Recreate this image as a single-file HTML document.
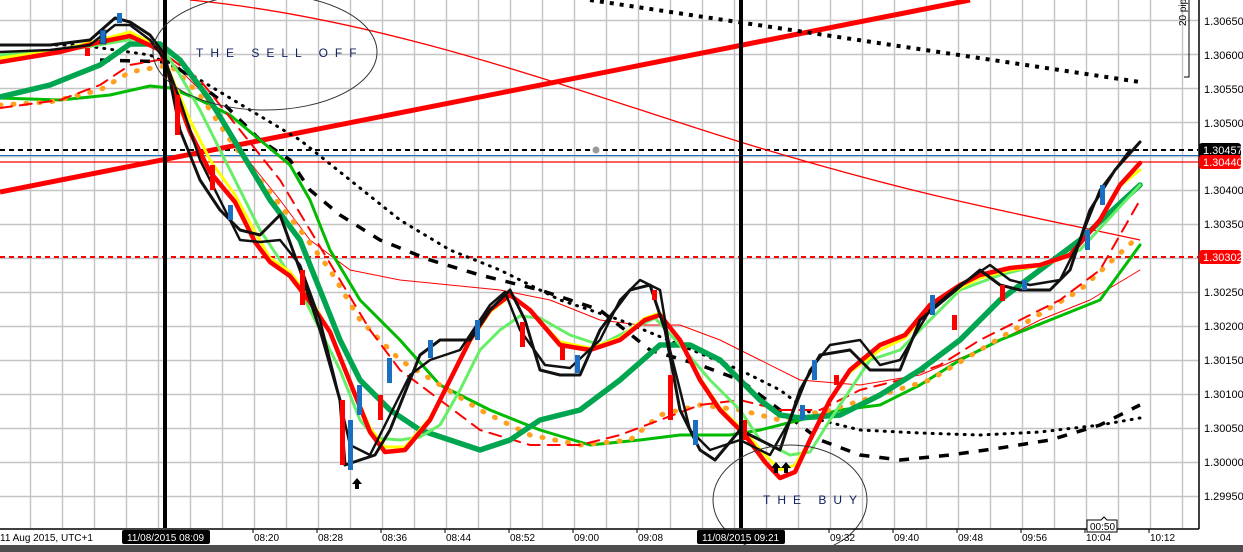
<!DOCTYPE html>
<html><head><meta charset="utf-8"><style>
html,body{margin:0;padding:0;background:#fff;width:1243px;height:552px;overflow:hidden}
svg{display:block;font-family:"Liberation Sans",sans-serif}
</style></head><body>
<svg width="1243" height="552" viewBox="0 0 1243 552" xmlns="http://www.w3.org/2000/svg">
<rect width="1243" height="552" fill="#fff"/>
<!-- grid -->
<path fill="none" stroke="#c4c4c4" stroke-width="1.4" d="M30.5 0V528M62.5 0V528M94.5 0V528M126.5 0V528M158.5 0V528M190.5 0V528M222.5 0V528M254.5 0V528M286.5 0V528M318.5 0V528M350.5 0V528M382.5 0V528M414.5 0V528M446.5 0V528M478.5 0V528M510.5 0V528M542.5 0V528M574.5 0V528M606.5 0V528M638.5 0V528M670.5 0V528M702.5 0V528M734.5 0V528M766.5 0V528M798.5 0V528M830.5 0V528M862.5 0V528M894.5 0V528M926.5 0V528M958.5 0V528M990.5 0V528M1022.5 0V528M1054.5 0V528M1086.5 0V528M1118.5 0V528M1150.5 0V528M1182.5 0V528"/>
<path fill="none" stroke="#c4c4c4" stroke-width="1.4" d="M0 20.5H1198M0 54.5H1198M0 88.5H1198M0 122.5H1198M0 156.5H1198M0 190.5H1198M0 224.5H1198M0 258.5H1198M0 292.5H1198M0 326.5H1198M0 360.5H1198M0 394.5H1198M0 428.5H1198M0 462.5H1198M0 496.5H1198"/>
<!-- horizontal levels -->
<path d="M0 150H1198" stroke="#000" stroke-width="2" stroke-dasharray="5,4"/>
<path d="M0 155.5H1198" stroke="#1a6fc0" stroke-width="1"/>
<path d="M0 162H1198" stroke="#f00" stroke-width="1.3"/>
<path d="M0 257H1198" stroke="#f00" stroke-width="2" stroke-dasharray="5,4"/>
<!-- trend lines -->
<path d="M0 192L970 0" stroke="#f00" stroke-width="5"/>
<path d="M590 0L1140 82" stroke="#000" stroke-width="4" stroke-dasharray="4,6"/>
<path d="M190 0C400 20 600 100 760 148S1000 210 1140 240" stroke="#f00" stroke-width="1.3" fill="none"/>
<circle cx="596" cy="150" r="3.5" fill="#999"/>
<g fill="none" stroke-linejoin="round" stroke-linecap="round">
<polyline stroke="#f00" stroke-width="1" points="160,50 200,90 240,150 280,200 310,240 350,270 400,280 450,285 500,290 550,300 600,320 640,325 680,325 720,340 760,360 800,380 860,385 920,375 980,350 1040,320 1090,300 1140,270"/>
<polyline stroke="#000" stroke-width="3" stroke-dasharray="1,7" points="0,45 80,45 150,55 200,80 250,110 300,140 350,180 400,220 450,250 500,270 560,300 620,320 680,345 740,370 780,390 820,420 860,430 920,433 980,435 1040,432 1100,425 1140,418"/>
<polyline stroke="#000" stroke-width="3.5" stroke-linecap="butt" stroke-dasharray="10,10" points="100,60 170,62 220,100 260,140 290,160 310,190 340,215 380,240 430,260 480,275 540,290 600,310 650,350 700,365 740,380 780,410 820,440 860,455 900,460 950,455 1000,448 1050,440 1100,425 1140,405"/>
<polyline stroke="#00bb00" stroke-width="3" points="0,98 60,100 110,95 150,86 170,88 200,100 230,115 260,140 290,165 310,200 330,250 360,300 400,340 440,385 490,410 540,430 590,445 640,440 680,435 730,435 760,430 800,420 840,410 880,405 920,385 960,360 1000,340 1050,320 1100,300 1140,245"/>
<polyline stroke="#ffa020" stroke-width="5" stroke-dasharray="1,12" points="0,105 50,102 100,90 130,72 170,65 200,95 230,140 260,180 300,230 330,270 360,320 400,360 440,385 480,410 530,435 580,445 630,440 660,415 700,405 740,410 780,420 830,410 880,395 930,380 980,350 1030,320 1080,290 1140,235"/>
<polyline stroke="#f00" stroke-width="2" stroke-dasharray="12,8" points="0,108 60,100 100,85 130,65 170,58 200,80 240,130 280,180 310,230 340,280 370,330 400,370 440,400 480,430 530,445 580,445 620,435 660,420 700,405 740,400 780,410 820,410 860,390 900,380 940,365 980,340 1020,320 1060,300 1100,270 1140,200"/>
<polyline stroke="#00a550" stroke-width="5.5" points="0,97 50,85 100,65 130,44 160,44 180,60 210,100 240,150 270,200 300,240 320,290 340,340 360,380 390,410 420,430 450,440 480,450 510,440 540,420 580,410 620,380 660,345 690,345 720,360 740,380 760,400 780,415 800,418 840,415 880,395 920,370 960,340 1000,300 1040,270 1080,240 1140,185"/>
<polyline stroke="#66ee66" stroke-width="3" points="0,55 80,48 140,38 165,52 180,75 200,110 230,170 260,230 280,260 300,290 320,330 340,370 360,420 375,438 400,440 420,437 440,425 460,390 480,350 500,330 520,316 540,318 570,335 600,345 630,330 655,318 680,345 710,380 740,410 760,440 790,455 810,452 830,420 850,390 870,360 900,350 930,320 960,290 1000,275 1040,265 1080,250 1140,185"/>
<polyline stroke="#ffff00" stroke-width="3" points="0,58 60,50 100,40 130,32 160,48 175,85 190,120 210,160 235,195 255,232 270,258 290,272 310,298 330,332 350,382 370,428 385,447 405,447 430,418 450,380 470,342 490,312 510,296 530,310 560,342 590,348 620,338 645,318 660,313 680,340 700,378 720,408 745,432 765,455 780,470 795,465 810,440 830,400 850,372 880,350 905,338 930,308 960,288 980,278 1010,270 1040,266 1070,256 1100,220 1120,186 1140,170"/>
<polyline stroke="#f00" stroke-width="4.5" points="0,62 60,52 100,42 130,36 160,50 175,92 190,132 210,172 235,202 255,242 270,262 290,276 310,302 330,332 350,382 370,432 385,452 405,450 430,420 450,380 470,340 490,310 510,295 530,310 560,345 590,350 620,340 645,320 660,315 680,340 700,380 720,410 745,435 765,462 780,478 795,472 810,440 830,400 850,370 880,345 905,335 930,305 960,285 980,275 1010,268 1040,265 1070,255 1100,220 1120,185 1140,163"/>
<polyline stroke="#111" stroke-width="3" points="0,45 50,45 90,40 115,18 130,22 150,35 165,55 180,130 200,180 220,210 240,230 260,235 280,215 300,270 320,330 340,400 345,465 360,460 375,455 390,430 410,380 420,355 440,340 470,340 490,310 510,290 525,320 540,370 560,375 580,375 600,330 630,290 650,285 665,330 680,410 700,450 715,460 740,430 760,440 780,450 800,390 820,355 850,350 870,370 900,370 920,320 950,295 980,270 1000,285 1020,290 1050,290 1070,270 1090,210 1115,170 1140,142"/>
<polyline stroke="#111" stroke-width="2.5" points="0,52 50,50 90,45 115,25 130,25 150,40 165,60 180,100 200,160 220,200 240,240 260,242 280,240 300,265 320,320 335,380 350,445 370,455 390,415 410,375 430,360 460,350 490,305 505,292 520,330 545,365 570,368 600,340 620,300 640,280 660,290 670,350 690,430 710,450 740,440 770,455 790,420 810,370 830,345 860,340 880,365 900,360 930,310 960,285 990,265 1010,280 1030,285 1060,280 1080,240 1100,190 1130,150"/>
</g>
<g>
<rect x="100" y="30" width="6" height="14" fill="#1a6fc0" stroke="#000" stroke-width="0.5"/>
<rect x="117" y="13" width="5" height="10" fill="#1a6fc0"/>
<rect x="85" y="48" width="5" height="8" fill="#f00"/>
<rect x="175" y="95" width="5" height="40" fill="#f00"/>
<rect x="210" y="165" width="5" height="25" fill="#f00"/>
<rect x="228" y="205" width="5" height="15" fill="#1a6fc0"/>
<rect x="300" y="270" width="5" height="35" fill="#f00"/>
<rect x="340" y="400" width="5" height="65" fill="#f00"/>
<rect x="348" y="420" width="5" height="50" fill="#1a6fc0"/>
<rect x="357" y="385" width="5" height="30" fill="#1a6fc0"/>
<rect x="378" y="395" width="5" height="25" fill="#f00"/>
<rect x="387" y="358" width="5" height="25" fill="#1a6fc0"/>
<rect x="428" y="340" width="5" height="18" fill="#1a6fc0"/>
<rect x="475" y="320" width="5" height="20" fill="#1a6fc0"/>
<rect x="520" y="322" width="5" height="25" fill="#f00"/>
<rect x="560" y="345" width="5" height="15" fill="#f00"/>
<rect x="575" y="355" width="5" height="18" fill="#1a6fc0"/>
<rect x="652" y="290" width="5" height="10" fill="#f00"/>
<rect x="668" y="375" width="5" height="45" fill="#f00"/>
<rect x="693" y="420" width="5" height="25" fill="#1a6fc0"/>
<rect x="742" y="420" width="5" height="20" fill="#f00"/>
<rect x="800" y="405" width="5" height="15" fill="#1a6fc0"/>
<rect x="812" y="360" width="5" height="20" fill="#1a6fc0"/>
<rect x="834" y="375" width="5" height="10" fill="#f00"/>
<rect x="930" y="295" width="5" height="20" fill="#1a6fc0"/>
<rect x="952" y="315" width="5" height="15" fill="#f00"/>
<rect x="1000" y="285" width="5" height="16" fill="#f00"/>
<rect x="1022" y="280" width="5" height="10" fill="#1a6fc0"/>
<rect x="1085" y="230" width="5" height="20" fill="#1a6fc0"/>
<rect x="1100" y="185" width="5" height="20" fill="#1a6fc0"/>
</g>
<path d="M165 0V528M741 0V528" stroke="#000" stroke-width="4"/>
<ellipse cx="265" cy="52" rx="112" ry="58" fill="none" stroke="#333" stroke-width="1"/>
<text x="196" y="57" font-size="12" fill="#102060" letter-spacing="7">THE SELL OFF</text>
<ellipse cx="790" cy="500" rx="77" ry="55" fill="none" stroke="#333" stroke-width="1"/>
<text x="763" y="504" font-size="12" fill="#102060" letter-spacing="7">THE BUY</text>
<g fill="#000"><path d="M357 478l-5 6h3v5h4v-5h3z"/><path d="M776 462l-5 6h3v5h4v-5h3z"/><path d="M786 462l-5 6h3v5h4v-5h3z"/></g>
<path d="M1189 0V77H1184" stroke="#000" stroke-width="1" fill="none"/>
<text transform="translate(1186,26) rotate(-90)" font-size="10" fill="#000">20 pips</text>
<path d="M1199 0V529M0 529H1199" stroke="#000" stroke-width="1.5"/>
<g font-size="11" fill="#000">
<text x="1204" y="25">1.30650</text><text x="1204" y="59">1.30600</text><text x="1204" y="93">1.30550</text>
<text x="1204" y="127">1.30500</text><text x="1204" y="194">1.30400</text><text x="1204" y="228">1.30350</text>
<text x="1204" y="296">1.30250</text><text x="1204" y="330">1.30200</text><text x="1204" y="364">1.30150</text>
<text x="1204" y="398">1.30100</text><text x="1204" y="432">1.30050</text><text x="1204" y="466">1.30000</text>
<text x="1204" y="500">1.29950</text>
</g>
<rect x="1199" y="143" width="42" height="14" rx="3" fill="#000"/><text x="1203" y="154" font-size="11" fill="#fff">1.30457</text>
<rect x="1199" y="155" width="42" height="14" rx="3" fill="#f00"/><text x="1203" y="166" font-size="11" fill="#fff">1.30440</text>
<rect x="1199" y="250" width="42" height="14" rx="3" fill="#f00"/><text x="1203" y="261" font-size="11" fill="#fff">1.30302</text>
<path stroke="#000" d="M253 529v4M317 529v4M381 529v4M445 529v4M509 529v4M573 529v4M637 529v4M829 529v4M893 529v4M957 529v4M1021 529v4M1085 529v4M1149 529v4"/>
<g font-size="10" fill="#000">
<text x="0" y="541">11 Aug 2015, UTC+1</text>
<text x="254" y="541">08:20</text><text x="318" y="541">08:28</text><text x="382" y="541">08:36</text>
<text x="446" y="541">08:44</text><text x="510" y="541">08:52</text><text x="574" y="541">09:00</text>
<text x="638" y="541">09:08</text><text x="830" y="541">09:32</text><text x="894" y="541">09:40</text>
<text x="958" y="541">09:48</text><text x="1022" y="541">09:56</text><text x="1086" y="541">10:04</text>
<text x="1150" y="541">10:12</text>
</g>
<rect x="122" y="530" width="88" height="14" rx="2" fill="#000"/><text x="127" y="541" font-size="10" fill="#fff">11/08/2015 08:09</text>
<rect x="697" y="530" width="88" height="14" rx="2" fill="#000"/><text x="702" y="541" font-size="10" fill="#fff">11/08/2015 09:21</text>
<path d="M1087 520h14l3-3 3 3h10v12h-30z" fill="#fff" stroke="#000" stroke-width="1"/>
<text x="1090" y="530" font-size="10" fill="#000">00:50</text>
<rect x="0" y="545" width="1243" height="7" fill="#4d4d4d"/>
</svg>
</body></html>
